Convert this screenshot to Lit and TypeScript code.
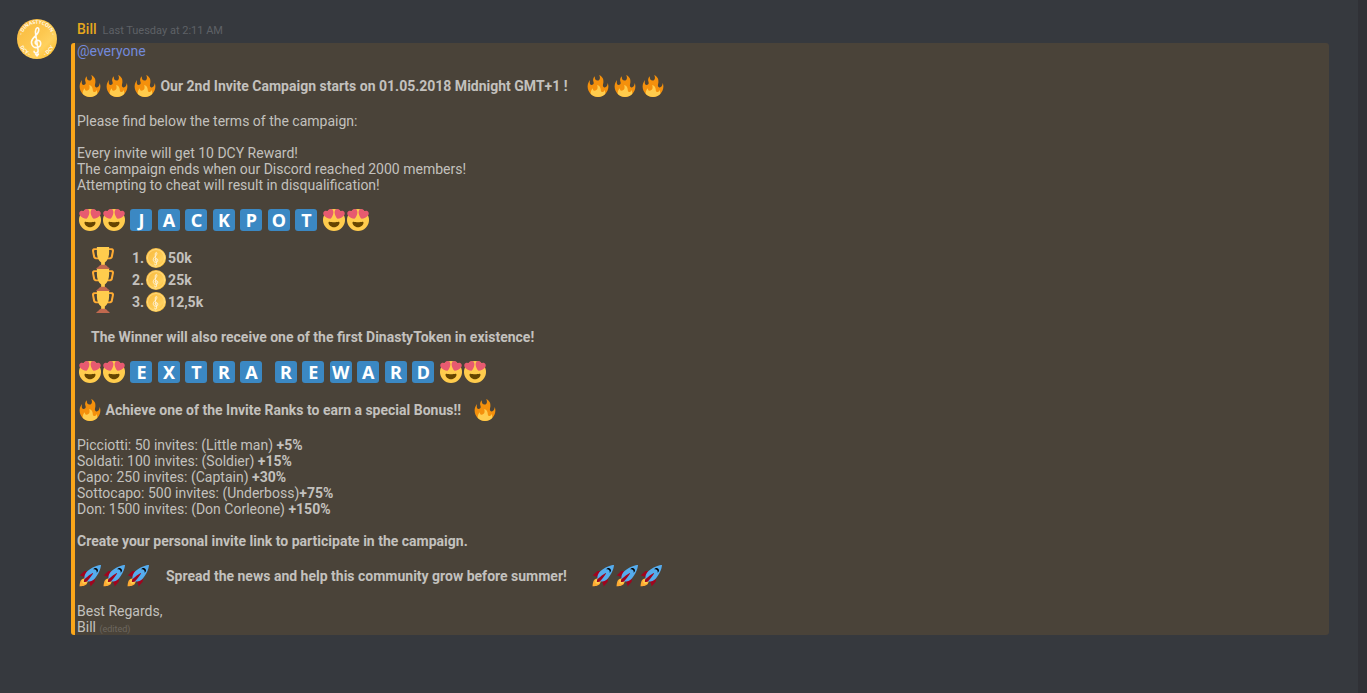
import { LitElement, html, svg, css, nothing } from 'lit';
import { customElement, property } from 'lit/decorators.js';

const heart = svg`<path fill="#E75A70" d="M16.65 3.281C15.791.85 13.126-.426 10.694.431c-1.476.52-2.521 1.711-2.928 3.104-1.191-.829-2.751-1.1-4.225-.58C1.111 3.813-.167 6.48.692 8.911c.122.344.284.663.472.958 1.951 3.582 7.588 6.1 11.001 6.131 2.637-2.167 5.446-7.665 4.718-11.677-.038-.348-.113-.698-.233-1.042z"/>`;
const handle = svg`<path fill="#FFAC33" d="M5.123 5h6C12.227 5 13 4.896 13 6V4c0-1.104-.773-2-1.877-2h-8c-2 0-3.583 2.125-3 5 0 0 1.791 9.375 1.917 9.958C2.373 18.5 4.164 20 6.081 20h6.958c1.105 0-.039-1.896-.039-3v-2c0 1.104-.773 2-1.877 2h-4c-1.104 0-1.833-1.042-2-2S3.539 7.667 3.539 7.667C3.206 5.75 4.018 5 5.123 5z"/>`;

const glyphs = {
  fire: svg`
    <path fill="#F4900C" d="M35 19c0-2.062-.367-4.039-1.04-5.868-.46 5.389-3.333 8.157-6.335 6.868-2.812-1.208-.917-5.917-.777-8.164.236-3.809-.012-8.169-6.931-11.794 2.875 5.5.333 8.917-2.333 9.125-2.958.231-5.667-2.542-4.667-7.042-3.238 2.386-3.332 6.402-2.333 9 1.042 2.708-.042 4.958-2.583 5.208-2.84.28-4.418-3.041-2.963-8.333C2.52 10.965 1 14.805 1 19c0 9.389 7.611 17 17 17s17-7.611 17-17z"/>
    <path fill="#FFCC4D" d="M28.394 23.999c.148 3.084-2.561 4.293-4.019 3.709-2.106-.843-1.541-2.291-2.083-5.291s-2.625-5.083-5.708-6c2.25 6.333-1.247 8.667-3.08 9.084-1.872.426-3.753-.001-3.968-4.007C7.352 23.668 6 26.676 6 30c0 .368.023.73.055 1.09C9.125 34.124 13.342 36 18 36s8.875-1.876 11.945-4.91c.032-.36.055-.722.055-1.09 0-2.187-.584-4.236-1.606-6.001z"/>`,
  love: svg`
    <circle fill="#FFCC4D" cx="18" cy="18" r="18"/>
    <path fill="#664500" d="M18 21.849c-2.966 0-4.935-.346-7.369-.819-.557-.106-1.638 0-1.638 1.638 0 3.275 3.763 7.369 9.007 7.369s9.007-4.094 9.007-7.369c0-1.638-1.082-1.745-1.638-1.638-2.434.473-4.402.819-7.369.819z"/>
    ${heart}<g transform="matrix(-1 0 0 1 36 0)">${heart}</g>`,
  trophy: svg`
    ${handle}<g transform="matrix(-1 0 0 1 36 0)">${handle}</g>
    <path fill="#FFCC4D" d="M8 0h20v9c0 7-2.500 13-7 16.500V32h-6v-6.500C10.500 22 8 16 8 9z"/>
    <path fill="#C1694F" d="M7 36c0-1.500 1-2.500 3-3 1.500-3 4.500-4 8-4s6.500 1 8 4c2 .5 3 1.500 3 3z"/>`,
  rocket: svg`
    <path fill="#A0041E" d="M1 17l8-7 16 1 1 16-7 8s.001-5.999-6-12-12-6-12-6z"/>
    <path fill="#FFAC33" d="M.973 35s-.036-7.979 2.985-11S15 21.187 15 21.187 14.999 29 11.999 32c-3 3-11.026 3-11.026 3z"/>
    <circle fill="#FFCC4D" cx="8.999" cy="27" r="4"/>
    <path fill="#55ACEE" d="M35.999 0s-10 0-22 10c-6 5-6 14-4 16s11 2 16-4c10-12 10-22 10-22z"/>
    <path d="M26.999 5c-1.623 0-3.013.971-3.641 2.36.502-.227 1.055-.36 1.641-.36 2.209 0 4 1.791 4 4 0 .586-.133 1.139-.359 1.640 1.389-.627 2.359-2.017 2.359-3.640 0-2.209-1.791-4-4-4z"/>
    <path fill="#A0041E" d="M8 28s0-4 1-5 13.001-10.999 14-10-9.001 13-10.001 14S8 28 8 28z"/>`,
};
type Glyph = keyof typeof glyphs;

@customElement('emoji-icon')
class EmojiIcon extends LitElement {
  @property() name: Glyph = 'fire';
  static styles = css`
    :host { display: inline-block; width: 22px; height: 22px; margin: 0 1px; vertical-align: top; }
    svg { display: block; width: 100%; height: 100%; }
  `;
  render() {
    return html`<svg viewBox="0 0 36 36" aria-hidden="true">${glyphs[this.name]}</svg>`;
  }
}

@customElement('dinasty-coin')
class DinastyCoin extends LitElement {
  @property({ type: Boolean }) lettered = false;
  static styles = css`
    :host { display: inline-block; vertical-align: top; }
    svg { display: block; width: 100%; height: 100%; }
    .clef { fill: none; stroke: #fffaf0; stroke-width: 1.6; stroke-linecap: round; stroke-linejoin: round; }
    .rim { font: 700 5px "Open Sans", sans-serif; fill: #fff8e6; text-anchor: middle; }
    .ring { fill: none; stroke: #ffe08f; stroke-width: 1.5; }
  `;
  render() {
    return html`<svg viewBox="0 0 40 40" role="img" aria-label="Dinastycoin">
      <defs>
        <linearGradient id="gold" x1="0" y1="0" x2="1" y2="1">
          <stop offset="0" stop-color="#f9b93f"/>
          <stop offset=".5" stop-color="#fdc850"/>
          <stop offset=".68" stop-color="#ffd15f"/>
          <stop offset="1" stop-color="#fbb61c"/>
        </linearGradient>
        <path id="top" d="M5 24A15.500 15.500 0 1 1 35 24"/>
        <path id="bottom" d="M1.500 20A18.500 18.500 0 0 0 38.500 20"/>
      </defs>
      <circle cx="20" cy="20" r="20" fill="url(#gold)"/>
      ${this.lettered
        ? svg`
          <text class="rim"><textPath href="#top" startOffset="50%">- DINASTYCOIN -</textPath></text>
          <text class="rim"><textPath href="#bottom" startOffset="25%">DCY -</textPath></text>
          <text class="rim"><textPath href="#bottom" startOffset="75%">- DCY</textPath></text>
          <path fill="#fffaf0" d="M20 38l-2-2.200c-.8-1.500 1.200-2 2-.8.8-1.200 2.800-.7 2 .8z"/>`
        : svg`<circle class="ring" cx="20" cy="20" r="17"/>`}
      <path class="clef" d="M19.500 25.500c-2.200-1.200-1.600-4 .8-4.300 4.300-.2 4.700 6.300.2 7.300-5.200.9-7.700-4.700-4.700-8.700 2.500-3.300 6.200-5.300 6-9.300-.2-2.700-2.800-2.300-3.300 1.500-.4 3.200 1.600 10 2.600 19.500.3 3-4 3.300-4 .8"/>
    </svg>`;
  }
}

const times = (name: Glyph, n: number, sep = '') =>
  Array.from({ length: n }, (_, i) => html`${i ? sep : nothing}<emoji-icon name=${name}></emoji-icon>`);

const tiles = (word: string) =>
  [...word].map((c, i) => html`${i ? ' ' : nothing}<span class="tile">${c}</span>`);

const prizes = ['50k', '25k', '12,5k'];
const ranks = [
  ['Picciotti: 50 invites: (Little man) ', '+5%'],
  ['Soldati: 100 invites: (Soldier) ', '+15%'],
  ['Capo: 250 invites: (Captain) ', '+30%'],
  ['Sottocapo: 500 invites: (Underboss)', '+75%'],
  ['Don: 1500 invites: (Don Corleone) ', '+150%'],
];

@customElement('app-root')
class AppRoot extends LitElement {
  static styles = css`
    :host {
      display: flex;
      min-height: 100vh;
      background: #36393e;
      color: #c3c1be;
      font: 14px/16px Roboto, sans-serif;
    }
    main { flex: 1; min-width: 0; }
    .track { width: 9px; background: #303136; }
    .message { display: flex; gap: 14px; padding: 19px 29px 19px 17px; }
    .avatar { flex: none; width: 40px; height: 40px; }
    .body { flex: 1; min-width: 0; }
    header { display: flex; align-items: baseline; gap: 6px; padding: 2px 6px 0; line-height: 16px; height: 22px; }
    h2 { margin: 0; font-size: 14px; font-weight: 500; color: #e6a81c; }
    time { font-size: 11px; color: #5e6166; }
    .mention {
      border-left: 4px solid #faa61a;
      border-radius: 3px;
      background: #4a4339;
      padding-left: 2px;
    }
    p, ol, ul { margin: 0 0 16px; padding: 0; list-style: none; white-space: pre-wrap; }
    p:last-child { margin: 0; }
    .big { line-height: 22px; padding-left: 1px; }
    .indent { padding-left: 14px; }
    .lead { margin-right: 18px; }
    .before-s { margin-left: 12px; }
    .before-m { margin-left: 18px; }
    .before-l { margin-left: 24px; }
    .after-m { margin-right: 16px; }
    b { font-weight: 700; }
    a { color: #7289da; text-decoration: none; }
    .coin { width: 20px; height: 20px; margin: 1px 2px; }
    .tile {
      display: inline-block;
      width: 22px;
      height: 22px;
      margin: 0 1px;
      border-radius: 3px;
      background: #3b88c3;
      color: #fff;
      font: 700 18px/22px "Noto Sans", sans-serif;
      text-align: center;
      vertical-align: top;
    }
    .edited { font-size: 9px; line-height: 12px; color: #6d675f; }
  `;

  render() {
    return html`
      <main>
        <article class="message">
          <dinasty-coin class="avatar" lettered></dinasty-coin>
          <div class="body">
            <header><h2>Bill</h2><time>Last Tuesday at 2:11 AM</time></header>
            <div class="mention">
              <p><a href="#everyone">@everyone</a></p>
              <p class="big">${times('fire', 3, ' ')} <b>Our 2nd Invite Campaign starts on 01.05.2018 Midnight GMT+1 !</b><span class="before-m">${times('fire', 3, ' ')}</span></p>
              <p>Please find below the terms of the campaign:</p>
              <p>Every invite will get 10 DCY Reward!<br>The campaign ends when our Discord reached 2000 members!<br>Attempting to cheat will result in disqualification!</p>
              <p class="big">${times('love', 2)} ${tiles('JACKPOT')} ${times('love', 2)}</p>
              <ol class="big indent">${prizes.map((prize, i) => html`<li><emoji-icon class="lead" name="trophy"></emoji-icon><b>${i + 1}.<dinasty-coin class="coin"></dinasty-coin>${prize}</b></li>`)}</ol>
              <p class="indent"><b>The Winner will also receive one of the first DinastyToken in existence!</b></p>
              <p class="big">${times('love', 2)} ${tiles('EXTRA')}   ${tiles('REWARD')} ${times('love', 2)}</p>
              <p class="big">${times('fire', 1)} <b>Achieve one of the Invite Ranks to earn a special Bonus!!</b><span class="before-s">${times('fire', 1)}</span></p>
              <ul>${ranks.map(([rank, bonus]) => html`<li>${rank}<b>${bonus}</b></li>`)}</ul>
              <p><b>Create your personal invite link to participate in the campaign.</b></p>
              <p class="big"><span class="after-m">${times('rocket', 3)}</span><b>Spread the news and help this community grow before summer!</b><span class="before-l">${times('rocket', 3)}</span></p>
              <p>Best Regards,<br>Bill <span class="edited">(edited)</span></p>
            </div>
          </div>
        </article>
      </main>
      <div class="track"></div>
    `;
  }
}
